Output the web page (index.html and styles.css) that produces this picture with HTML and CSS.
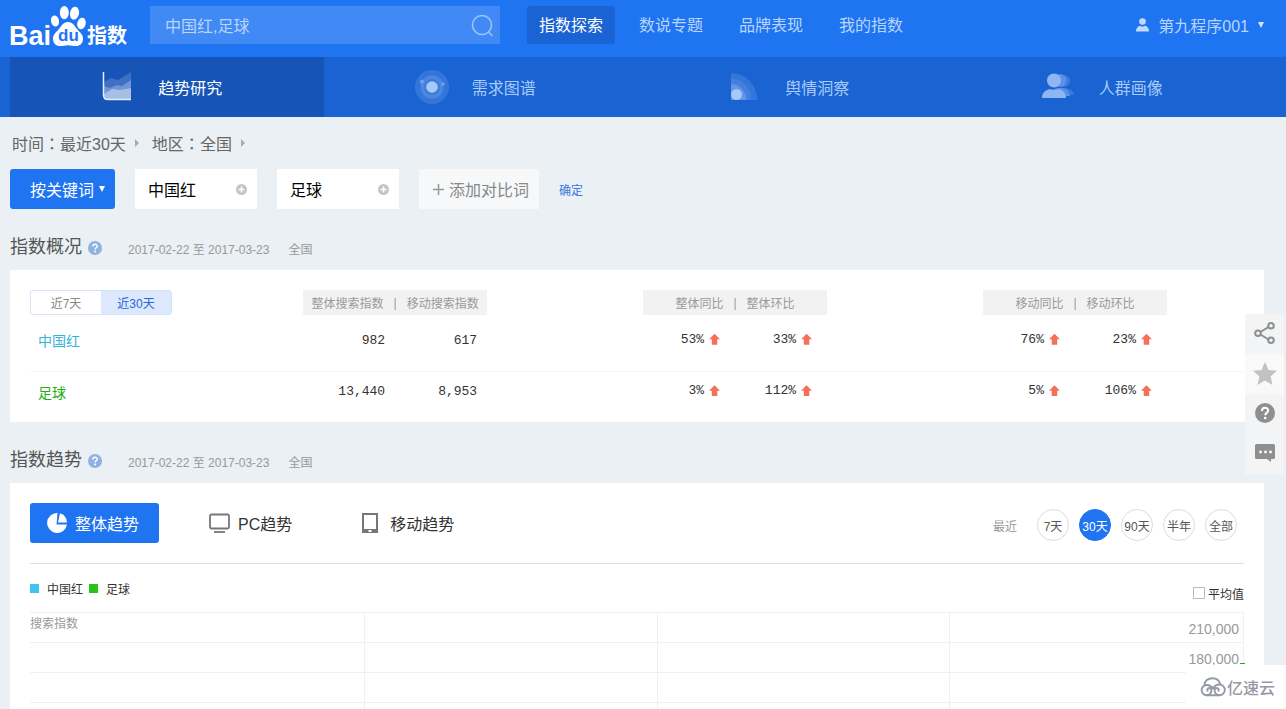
FILE: index.html
```html
<!DOCTYPE html>
<html lang="zh-CN">
<head>
<meta charset="utf-8">
<title>百度指数</title>
<link rel="stylesheet" href="styles.css">
</head>
<body>
<header class="top">
  <a class="logo" href="#" aria-label="百度指数">
    <svg width="122" height="44" viewBox="8 4 122 44">
      <text class="logo-word" x="9" y="45">Bai</text>
      <g fill="#fff">
        <ellipse cx="55" cy="21" rx="4" ry="5.6" transform="rotate(-12 55 21)"/>
        <ellipse cx="64.300" cy="12.600" rx="4.500" ry="6.600"/>
        <ellipse cx="74.500" cy="13.200" rx="4.500" ry="6.600" transform="rotate(10 74.500 13.200)"/>
        <ellipse cx="81.500" cy="23.500" rx="4.200" ry="5.800" transform="rotate(14 81.500 23.500)"/>
        <path d="M68 22c5 0 6.500 4 9 7 3 3.500 6.500 5.500 6 10.500-.4 4-3 6.500-7 6.500-3 0-5-.8-8-.8s-5 .8-8 .8c-4 0-6.600-2.500-7-6.500-.4-5 3-7 6-10.500 2.500-3 4-7 9-7z"/>
      </g>
      <text class="logo-du" x="58" y="41">du</text>
      <text class="logo-cn" x="87" y="43">指数</text>
    </svg>
  </a>
  <form class="search">
    <input class="search-input" type="text" value="中国红,足球" aria-label="搜索关键词">
    <button class="search-btn" type="button" aria-label="搜索">
      <svg width="24" height="24" viewBox="0 0 24 24" fill="none" stroke="#9cc3fa" stroke-width="1.600"><circle cx="12" cy="12" r="9.500"/><path d="M18.500 19l4 4"/></svg>
    </button>
  </form>
  <nav class="main-nav">
    <a class="main-link main-link-on" href="#">指数探索</a>
    <a class="main-link" href="#">数说专题</a>
    <a class="main-link" href="#">品牌表现</a>
    <a class="main-link" href="#">我的指数</a>
  </nav>
  <button class="user" type="button">
    <svg width="13" height="14" viewBox="0 0 13 14" fill="#c3dafd"><circle cx="6.500" cy="3.500" r="3.300"/><path d="M0 13.500c0-3.500 1.500-5 4-5.800a4.500 4.500 0 0 0 5 0c2.500.8 4 2.300 4 5.800z"/></svg>
    <span>第九程序001</span>
    <svg width="6" height="6" viewBox="0 0 6 6" fill="#d5e5fe"><path d="M0 0h6l-3 6z"/></svg>
  </button>
</header>

<nav class="sub-nav">
  <a class="sub-link sub-link-on" href="#">
    <svg width="36" height="36" viewBox="0 0 36 36">
      <path d="M4 13l7-4 7 2 13-8v27H8q-4 0-4-4z" fill="#3e6fc4"/>
      <path d="M4 17l6 2 7-3 5 1 9-6v19H8q-4 0-4-4z" fill="#7095d5"/>
      <path d="M4 25l8-5 8 1 11-2v11H8q-4 0-4-4z" fill="#a7bfe7"/>
      <path d="M3.500 3v23q0 4.500 4.500 4.500h23" fill="none" stroke="#e3effe" stroke-width="1.500"/>
    </svg>
    <span>趋势研究</span>
  </a>
  <a class="sub-link" href="#">
    <svg width="36" height="36" viewBox="0 0 36 36">
      <circle cx="18" cy="18" r="17" fill="#3475d9"/><circle cx="18" cy="18" r="11.500" fill="#4d87e1"/><circle cx="18" cy="18" r="8" fill="#3d7cdd"/><circle cx="18" cy="18" r="5.800" fill="#a6c9fa"/><circle cx="8" cy="12.500" r="2" fill="#6ea1ef"/><circle cx="29" cy="15" r="1.800" fill="#6ea1ef"/>
    </svg>
    <span>需求图谱</span>
  </a>
  <a class="sub-link" href="#">
    <svg width="36" height="36" viewBox="0 0 36 36">
      <path d="M4 4a26 26 0 0 1 26 27H4z" fill="#3475d9"/><path d="M4 9.500a20 20 0 0 1 20 21.500H4z" fill="#4580df"/><path d="M4 15a15 15 0 0 1 15 16H4z" fill="#6197e8"/><circle cx="9.500" cy="25.500" r="5.500" fill="#a6c9fa"/>
    </svg>
    <span>舆情洞察</span>
  </a>
  <a class="sub-link" href="#">
    <svg width="36" height="36" viewBox="0 0 36 36">
      <g fill="#3b7add"><circle cx="23" cy="12" r="6"/><path d="M14 26c1-5 4-7 9-7s9 2 10 7z"/></g>
      <g fill="#5b91e6"><circle cx="19" cy="11.500" r="6.500"/><path d="M8 27c1-6 5-8 11-8s9 2 10 8z"/></g>
      <g fill="#8fb6f2"><circle cx="13" cy="11.500" r="7"/><path d="M1 29c0-6 4-8 8-9a9 9 0 0 0 8 0c4 1 8 3 8 9z"/></g>
    </svg>
    <span>人群画像</span>
  </a>
</nav>

<main class="page">
  <div class="scope">
    <button class="scope-item" type="button"><span>时间<span lang="zh-TW">：</span>最近30天</span><svg width="4" height="8" viewBox="0 0 4 8" fill="#aaa"><path d="M0 0l4 4-4 4z"/></svg></button>
    <button class="scope-item" type="button"><span>地区<span lang="zh-TW">：</span>全国</span><svg width="4" height="8" viewBox="0 0 4 8" fill="#aaa"><path d="M0 0l4 4-4 4z"/></svg></button>
  </div>

  <div class="filters">
    <button class="by-word" type="button"><span>按关键词</span><svg width="6" height="6" viewBox="0 0 6 6" fill="#fff"><path d="M0 0h6l-3 6z"/></svg></button>
    <div class="word">
      <input class="word-input" type="text" value="中国红" aria-label="关键词一">
      <button class="word-plus" type="button" aria-label="添加"><svg width="11" height="11" viewBox="0 0 11 11"><circle cx="5.500" cy="5.500" r="5.500" fill="#c4c4c4"/><path d="M5.500 2.500v6M2.500 5.500h6" stroke="#fff" stroke-width="1.500"/></svg></button>
    </div>
    <div class="word">
      <input class="word-input" type="text" value="足球" aria-label="关键词二">
      <button class="word-plus" type="button" aria-label="添加"><svg width="11" height="11" viewBox="0 0 11 11"><circle cx="5.500" cy="5.500" r="5.500" fill="#c4c4c4"/><path d="M5.500 2.500v6M2.500 5.500h6" stroke="#fff" stroke-width="1.500"/></svg></button>
    </div>
    <button class="add-word" type="button"><svg width="11" height="11" viewBox="0 0 11 11"><path d="M5.500 0v11M0 5.500h11" stroke="#999" stroke-width="1.500"/></svg><span>添加对比词</span></button>
    <a class="confirm" href="#">确定</a>
  </div>

  <section>
    <div class="heading">
      <h2 class="title">指数概况</h2>
      <svg class="help" width="14" height="14" viewBox="0 0 14 14"><circle cx="7" cy="7" r="7" fill="#8fb1e3"/><path d="M4.900 5.500c0-3 4.300-2.800 4.300-.3 0 1.500-2.100 1.600-2.100 3.200" fill="none" stroke="#fff" stroke-width="1.500"/><circle cx="7.100" cy="10.500" r="1" fill="#fff"/></svg>
      <span class="meta">2017-02-22 至 2017-03-23</span>
      <span class="meta">全国</span>
    </div>
    <div class="card">
      <table class="overview">
        <thead>
          <tr>
            <th class="col-name"><div class="toggle"><button class="toggle-btn" type="button">近7天</button><button class="toggle-btn toggle-on" type="button">近30天</button></div></th>
            <th class="col-group"><div class="group-head"><span>整体搜索指数</span><span>|</span><span>移动搜索指数</span></div></th>
            <th class="col-group"><div class="group-head"><span>整体同比</span><span>|</span><span>整体环比</span></div></th>
            <th><div class="group-head"><span>移动同比</span><span>|</span><span>移动环比</span></div></th>
          </tr>
        </thead>
        <tbody>
          <tr class="row-first">
            <td class="name name-blue">中国红</td>
            <td><div class="pair"><span>982</span><span>617</span></div></td>
            <td><div class="pair pair-rate"><span>53%<i class="up"></i></span><span>33%<i class="up"></i></span></div></td>
            <td><div class="pair pair-rate"><span>76%<i class="up"></i></span><span>23%<i class="up"></i></span></div></td>
          </tr>
          <tr>
            <td class="name name-green">足球</td>
            <td><div class="pair"><span>13,440</span><span>8,953</span></div></td>
            <td><div class="pair pair-rate"><span>3%<i class="up"></i></span><span>112%<i class="up"></i></span></div></td>
            <td><div class="pair pair-rate"><span>5%<i class="up"></i></span><span>106%<i class="up"></i></span></div></td>
          </tr>
        </tbody>
      </table>
    </div>
  </section>

  <section>
    <div class="heading">
      <h2 class="title">指数趋势</h2>
      <svg class="help" width="14" height="14" viewBox="0 0 14 14"><circle cx="7" cy="7" r="7" fill="#8fb1e3"/><path d="M4.900 5.500c0-3 4.300-2.800 4.300-.3 0 1.500-2.100 1.600-2.100 3.200" fill="none" stroke="#fff" stroke-width="1.500"/><circle cx="7.100" cy="10.500" r="1" fill="#fff"/></svg>
      <span class="meta">2017-02-22 至 2017-03-23</span>
      <span class="meta">全国</span>
    </div>
    <div class="card">
      <div class="trend-bar">
        <button class="trend-tab trend-on" type="button">
          <svg width="20" height="20" viewBox="0 0 20 20" fill="#fff"><path d="M10.500 0A10 10 0 1 0 20 11.500H9.500z"/><path d="M13 .3A9.500 9.500 0 0 1 20 9.500h-9z"/></svg>
          <span>整体趋势</span>
        </button>
        <button class="trend-tab" type="button">
          <svg width="21" height="20" viewBox="0 0 21 20" fill="none" stroke="#777" stroke-width="1.800"><rect x="1" y="1.500" width="19" height="14" rx="1.500"/><path d="M5 19h11"/></svg>
          <span>PC趋势</span>
        </button>
        <button class="trend-tab trend-mobile" type="button">
          <svg width="16" height="20" viewBox="0 0 16 20"><path d="M0 0h16v20H0zM2 2v14h12V2z" fill="#777" fill-rule="evenodd"/><rect x="6.500" y="17" width="3" height="2" fill="#fff"/></svg>
          <span>移动趋势</span>
        </button>
        <div class="periods">
          <span class="periods-label">最近</span>
          <button class="period" type="button">7天</button>
          <button class="period period-on" type="button">30天</button>
          <button class="period" type="button">90天</button>
          <button class="period" type="button">半年</button>
          <button class="period" type="button">全部</button>
        </div>
      </div>
      <div class="legend-bar">
        <span class="legend legend-blue">中国红</span>
        <span class="legend legend-green">足球</span>
        <label class="average"><input class="average-box" type="checkbox">平均值</label>
      </div>
      <div class="chart">
        <div class="cell cell-title">搜索指数</div><div class="cell"></div><div class="cell"></div><div class="cell cell-value">210,000</div>
        <div class="cell"></div><div class="cell"></div><div class="cell"></div><div class="cell cell-value">180,000</div>
        <div class="cell"></div><div class="cell"></div><div class="cell"></div><div class="cell"></div>
        <div class="cell"></div><div class="cell"></div><div class="cell"></div><div class="cell"></div>
        <i class="line-end"></i>
      </div>
    </div>
  </section>
</main>

<aside class="tools">
  <button class="tool" type="button" aria-label="分享"><svg width="22" height="22" viewBox="0 0 22 22" fill="none" stroke="#8f8f8f" stroke-width="2"><path d="M6.500 10l8-5M6.500 12.500l8 5"/><circle cx="4" cy="11.200" r="2.800"/><circle cx="17" cy="3.800" r="2.800"/><circle cx="17" cy="18.200" r="2.800"/></svg></button>
  <button class="tool tool-light" type="button" aria-label="收藏"><svg width="24" height="23" viewBox="0 0 24 23" fill="#c2c2c2"><path d="M12 0l3.500 8 8.500.8-6.400 5.700 1.900 8.500L12 18.500 4.500 23l1.900-8.500L0 8.800 8.500 8z"/></svg></button>
  <button class="tool" type="button" aria-label="帮助"><svg width="20" height="20" viewBox="0 0 20 20"><circle cx="10" cy="10" r="10" fill="#8f8f8f"/><path d="M7 8c0-4.300 6.200-4 6.200-.4 0 2.200-3 2.400-3 4.600" fill="none" stroke="#fff" stroke-width="2"/><circle cx="10.200" cy="15" r="1.300" fill="#fff"/></svg></button>
  <button class="tool" type="button" aria-label="反馈"><svg width="20" height="18" viewBox="0 0 20 18"><path d="M1.500 0h17q1.500 0 1.500 1.500v12q0 1.500-1.500 1.500H16v3l-4-3H1.500Q0 15 0 13.500v-12Q0 0 1.500 0z" fill="#8f8f8f"/><g fill="#fff"><circle cx="5.500" cy="8" r="1.400"/><circle cx="10.500" cy="8" r="1.400"/><circle cx="15.500" cy="8" r="1.400"/></g></svg></button>
</aside>

<div class="mark">
  <svg width="26" height="20" viewBox="0 0 26 20" fill="none" stroke="#9499a3" stroke-width="1.900" stroke-linecap="round">
    <path d="M4.500 8C4.500 4 8 1.200 12.500 1.200c3.800 0 6.600 2 7.500 5.300"/>
    <path d="M7.500 13.800a2 2 0 1 1 3.800-1.300c.5 3-1.500 5.700-4.600 5.700a5 5 0 0 1 0-10.200c2.800 0 4.800 1.300 6.300 3.500"/>
    <path d="M18.500 13.800a2 2 0 1 0-3.800-1.300c-.5 3 1.500 5.700 4.800 5.700a5.200 5.200 0 0 0 0-10.700c-3 0-5.200 1.500-6.500 4"/>
    <path d="M6.700 18.200h12.800"/>
  </svg>
  <span>亿速云</span>
</div>
</body>
</html>
```
FILE: styles.css
```css
* { box-sizing: border-box; }

body {
  margin: 0;
  height: 100vh;
  overflow: hidden;
  background: #eaf0f3;
  color: #333;
  font-family: "Liberation Sans", "Noto Sans CJK SC", sans-serif;
  font-size: 16px;
}

button, input {
  margin: 0;
  padding: 0;
  border: 0;
  background: none;
  color: inherit;
  font: inherit;
}

button { cursor: pointer; }
a { color: inherit; text-decoration: none; }
svg { display: block; flex: none; }

/* Header */
.top {
  display: flex;
  align-items: flex-start;
  height: 57px;
  padding: 6px 22px 0 8px;
  background: #1f74f2;
  color: #b9d5fd;
}

.logo { width: 142px; margin-top: -2px; }
.logo-word { fill: #fff; font-size: 27px; font-weight: bold; }
.logo-du { fill: #1f74f2; font-size: 17px; font-weight: bold; }
.logo-cn { fill: #fff; font-size: 20px; font-weight: bold; }

.search {
  display: flex;
  align-items: center;
  width: 350px;
  height: 38px;
  padding: 0 6px 0 15px;
  background: #4189f4;
}
.search-input { flex: 1; min-width: 0; height: 38px; color: #b9d5fd; }

.main-nav { display: flex; gap: 12px; margin-left: 27px; }
.main-link {
  width: 88px;
  border-radius: 3px;
  line-height: 40px;
  height: 38px;
  text-align: center;
}
.main-link-on { background: #1a63d2; color: #fff; }

.user {
  display: flex;
  align-items: center;
  gap: 9px;
  height: 38px;
  margin-left: auto;
}

/* Section tabs */
.sub-nav {
  display: flex;
  height: 60px;
  padding: 0 22px 0 10px;
  background: #1a63d2;
  color: #a9cbfb;
}
.sub-link {
  display: flex;
  flex: 1;
  align-items: center;
  justify-content: center;
  gap: 22px;
  padding-right: 11px;
}
.sub-link-on { background: #1655b7; color: #fff; }

/* Filters */
.page { padding: 0 22px 0 10px; }

.scope { display: flex; gap: 13px; height: 52px; padding-left: 2px; color: #666; }
.scope-item { display: flex; align-items: center; gap: 9px; }
.scope-item [lang] { font-family: "Noto Sans CJK TC", sans-serif; }

.filters { display: flex; align-items: center; gap: 20px; }
.by-word {
  display: flex;
  align-items: center;
  gap: 5px;
  height: 40px;
  padding: 0 10px 0 20px;
  border-radius: 3px;
  background: #1f74f2;
  color: #fff;
}
.word {
  display: flex;
  align-items: center;
  width: 122px;
  height: 40px;
  padding: 0 10px 0 13px;
  background: #fff;
  color: #000;
}
.word-input { flex: 1; min-width: 0; height: 40px; }
.add-word {
  display: flex;
  align-items: center;
  gap: 5px;
  height: 40px;
  padding: 0 10px 0 14px;
  background: #f6f8f9;
  color: #888;
}
.confirm { color: #3b78dd; font-size: 12px; }

/* Cards */
.heading { display: flex; align-items: center; height: 61px; padding-top: 17px; }
.title { margin: 0; color: #555; font-size: 18px; font-weight: normal; line-height: 24px; padding-bottom: 2px; }
.help { margin: 0 26px 0 6px; }
.meta { margin-right: 19px; color: #999; font-size: 12px; }

.card { padding: 20px; background: #fff; }
.card + .card { margin-top: 20px; }

.overview { width: 100%; border-collapse: collapse; table-layout: fixed; margin-bottom: -10px; }
.overview th, .overview td { padding: 0; text-align: left; font-weight: normal; }
.overview th { height: 30px; vertical-align: top; }
.overview td { height: 41px; }
.overview .row-first { border-bottom: 1px solid #f5f5f5; }
.overview .row-first td { height: 51px; padding-bottom: 10px; }
.col-name { width: 22.5%; }
.col-group { width: 28%; }

.toggle { display: inline-flex; height: 25px; border: 1px solid #d5e2f8; border-radius: 3px; }
.toggle-btn { width: 70px; color: #888; font-size: 12px; }
.toggle-on { background: #dce9fd; color: #2b65d9; }

.group-head {
  display: flex;
  align-items: center;
  justify-content: center;
  gap: 10px;
  width: 184px;
  height: 25px;
  background: #f2f2f2;
  color: #999;
  font-size: 12px;
}

.overview .name { padding-left: 8px; font-size: 14px; }
.name-blue { color: #35b3da; }
.name-green { color: #22b014; }

.pair {
  display: grid;
  grid-template-columns: 92px 92px;
  font-family: "Liberation Mono", monospace;
  font-size: 13px;
}
.pair span { display: flex; align-items: center; justify-content: flex-end; gap: 5px; padding-right: 10px; }
.pair-rate { padding-bottom: 2px; }
.pair-rate span { padding-right: 15px; }
.up {
  width: 11px;
  height: 11px;
  background: #f3705a;
  clip-path: polygon(50% 0, 100% 50%, 75% 50%, 75% 100%, 25% 100%, 25% 50%, 0 50%);
}

/* Trend */
.trend-bar {
  display: flex;
  align-items: center;
  padding-bottom: 20px;
  border-bottom: 1px solid #ddd;
}
.trend-tab { display: flex; align-items: center; gap: 8px; height: 40px; margin-right: 50px; }
.trend-on { padding: 0 20px 0 17px; border-radius: 3px; background: #1f74f2; color: #fff; }
.trend-mobile { gap: 12px; margin-left: 20px; }

.periods { display: flex; align-items: center; gap: 10px; margin: 4px 7px 0 auto; font-size: 12px; }
.periods-label { margin-right: 10px; color: #999; }
.period {
  width: 32px;
  height: 32px;
  border: 1px solid #ddd;
  border-radius: 50%;
  color: #555;
  white-space: nowrap;
  display: flex;
  align-items: center;
  justify-content: center;
}
.period-on { border-color: #1f74f2; background: #1f74f2; color: #fff; }

.legend-bar { display: flex; align-items: center; gap: 6px; height: 48px; font-size: 12px; }
.legend { display: flex; align-items: center; gap: 8px; }
.legend::before { width: 9px; height: 9px; content: ""; }
.legend-blue::before { background: #3fc5f0; }
.legend-green::before { background: #2bc116; }
.average { display: flex; align-items: center; gap: 3px; margin: 10px 0 0 auto; }
.average-box {
  width: 12px;
  height: 12px;
  border: 1px solid #bbb;
  background: #fff;
  appearance: none;
}

.chart {
  position: relative;
  display: grid;
  grid-template-columns: 335fr 293fr 293fr 294fr;
  grid-auto-rows: 30px;
  border-right: 1px solid #f0f0f0;
  color: #999;
}
.cell { border-top: 1px solid #f0f0f0; border-left: 1px solid #f0f0f0; }
.cell:nth-child(4n + 1) { border-left: 0; }
.cell-title { font-size: 12px; line-height: 22px; }
.cell-value { padding-right: 4px; font-size: 14px; line-height: 32px; text-align: right; }
.line-end {
  position: absolute;
  top: 51px;
  right: -2px;
  width: 5px;
  height: 1px;
  background: #2ba616;
}

/* Overlays */
.tools { position: fixed; top: 314px; right: 2px; width: 39px; }
.tool {
  display: flex;
  align-items: center;
  justify-content: center;
  width: 100%;
  height: 40px;
  padding-bottom: 2px;
  background: #f3f4f5;
}
.tool-light { background: #f9f9f9; }

.mark {
  position: fixed;
  right: 0;
  bottom: 0;
  display: flex;
  align-items: center;
  gap: 1px;
  height: 44px;
  padding: 0 11px 0 14px;
  background: #fff;
  color: #9499a3;
  font-size: 16px;
  font-weight: 500;
}
```
